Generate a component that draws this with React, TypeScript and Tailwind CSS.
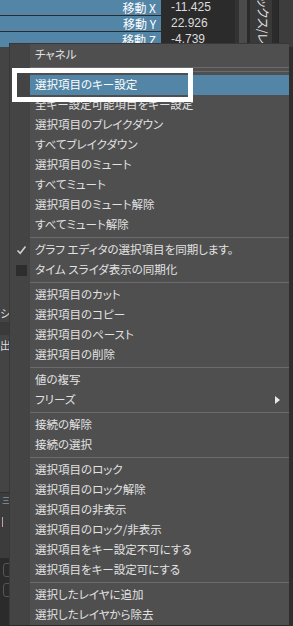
import React from "react";

type Item =
  | { kind: "item"; text: string; active?: boolean; check?: "on" | "off"; sub?: boolean }
  | { kind: "sep" }
  | { kind: "dsep" };

const it = (text: string, extra: Partial<Extract<Item, { kind: "item" }>> = {}): Item => ({
  kind: "item",
  text,
  ...extra,
});
const sep: Item = { kind: "sep" };

const menu: Item[] = [
  it("チャネル"),
  { kind: "dsep" },
  it("選択項目のキー設定", { active: true }),
  it("全キー設定可能項目をキー設定"),
  it("選択項目のブレイクダウン"),
  it("すべてブレイクダウン"),
  it("選択項目のミュート"),
  it("すべてミュート"),
  it("選択項目のミュート解除"),
  it("すべてミュート解除"),
  sep,
  it("グラフ エディタの選択項目を同期します。", { check: "on" }),
  it("タイム スライダ表示の同期化", { check: "off" }),
  sep,
  it("選択項目のカット"),
  it("選択項目のコピー"),
  it("選択項目のペースト"),
  it("選択項目の削除"),
  sep,
  it("値の複写"),
  it("フリーズ", { sub: true }),
  sep,
  it("接続の解除"),
  it("接続の選択"),
  sep,
  it("選択項目のロック"),
  it("選択項目のロック解除"),
  it("選択項目の非表示"),
  it("選択項目のロック/非表示"),
  it("選択項目をキー設定不可にする"),
  it("選択項目をキー設定可にする"),
  sep,
  it("選択したレイヤに追加"),
  it("選択したレイヤから除去"),
];

const channels = [
  { label: "移動 X", value: "-11.425" },
  { label: "移動 Y", value: "22.926" },
  { label: "移動 Z", value: "-4.739" },
];

function Row({ item }: { item: Item }) {
  if (item.kind === "sep" || item.kind === "dsep") {
    return (
      <div className="flex">
        <div className="w-[20px] bg-[#444444]" />
        <div className={`flex flex-1 flex-col ${item.kind === "dsep" ? "h-[10px]" : "h-[5px]"}`}>
          <div className="mt-[2px] h-px bg-[#6b6b6b]" />
          {item.kind === "dsep" && <div className="mt-[3px] h-px bg-[#6b6b6b]" />}
        </div>
      </div>
    );
  }
  return (
    <div className="flex h-[20px]">
      <div className="flex w-[20px] items-center justify-center bg-[#444444]">
        {item.check === "on" && (
          <svg width="11" height="10" viewBox="0 0 11 10" className="ml-[2px]">
            <path d="M1.5 5.5 L4.2 8.2 L9.5 1.5" fill="none" stroke="#d0d0d0" strokeWidth="1.6" />
          </svg>
        )}
        {item.check === "off" && <div className="ml-[2px] h-[11px] w-[11px] bg-[#2d2d2d]" />}
      </div>
      <div
        className={`flex flex-1 items-center pl-[5px] pr-[9px] ${
          item.active ? "bg-[#5285a6] text-white" : "text-[#e2e2e2]"
        }`}
      >
        <span className="flex-1 whitespace-nowrap">{item.text}</span>
        {item.sub && (
          <span className="h-0 w-0 border-y-[4px] border-l-[5px] border-y-transparent border-l-[#e8e8e8]" />
        )}
      </div>
    </div>
  );
}

export default function App() {
  return (
    <div className="relative h-[626px] w-[293px] overflow-hidden bg-[#444444] font-['Noto_Sans_CJK_JP','Noto_Sans',sans-serif] [font-feature-settings:'palt']">
      {/* channel box behind the menu */}
      <div className="flex h-[47px]">
        <div className="flex w-[235px] flex-col gap-px bg-[#2b2b2b]">
          {channels.map((c) => (
            <div key={c.label} className="flex h-[15px] gap-px text-[12px] leading-[15px]">
              <div className="w-[161px] bg-[#5285a6] pr-[5px] text-right text-white">{c.label}</div>
              <div className="flex-1 bg-[#2b2b2b] pl-[9px] font-['Liberation_Sans',sans-serif] text-[#dcdcdc]">
                {c.value}
              </div>
            </div>
          ))}
        </div>
        <div className="w-[4px] bg-[#333333]" />
        <div className="w-[8px] bg-[#4b4b4b]" />
        <div className="w-[3px] bg-[#2b2b2b]" />
        <div className="w-[22px] overflow-hidden bg-[#393939]">
          <div className="-mt-[2px] ml-[6px] whitespace-nowrap text-[12px] leading-[14px] text-[#e4e4e4] [writing-mode:vertical-rl] [text-orientation:sideways]">
            ックス/レイヤ エディタ
          </div>
        </div>
        <div className="w-[6px] bg-[#2b2b2b]" />
        <div className="flex-1 border-l border-[#262626] bg-[#3d3d3d]" />
      </div>

      {/* panels peeking out on the left */}
      <div className="flex h-[579px]">
        <div className="flex flex-1 flex-col text-[11px] text-[#dcdcdc]">
          <div className="flex h-[275px] items-end">
            <span className="mb-[2px] leading-[14px]">シ</span>
          </div>
          <div className="h-[13px] bg-[#3a3a3a]" />
          <div className="h-[157px]">
            <span className="mt-[3px] block leading-[14px]">出</span>
          </div>
          <div className="h-px bg-[#2f2f2f]" />
          <div className="flex h-[65px] flex-col bg-[#3c3c3c] pl-[2px] text-[#9fb8cc]">
            <span className="mt-[2px] text-[8px] leading-[10px]">三</span>
            <span className="mt-[12px] h-[10px] w-[2px] border-l border-[#c7a0a0]" />
          </div>
          <div className="flex flex-1 flex-col gap-[6px] bg-[#2b2b2b] pl-[3px] pt-[5px]">
            <div className="h-[14px] w-[10px] rounded-[3px] border border-[#555555]" />
            <div className="h-[14px] w-[10px] rounded-[3px] border border-[#555555]" />
          </div>
        </div>
        <div className="w-[4px] bg-[#2e2e2e]" />
      </div>

      {/* context menu */}
      <div className="absolute left-[9px] top-[43px] w-[280px] border-l border-t border-[#383838] bg-[#4f4f4f] text-[11.5px]">
        <div className="flex h-[1px]">
          <div className="w-[20px] bg-[#444444]" />
        </div>
        {menu.map((item, i) => (
          <Row key={i} item={item} />
        ))}
      </div>

      {/* annotation box */}
      <div className="absolute left-[12px] top-[68px] h-[34px] w-[181px] border-[5px] border-white" />
    </div>
  );
}
